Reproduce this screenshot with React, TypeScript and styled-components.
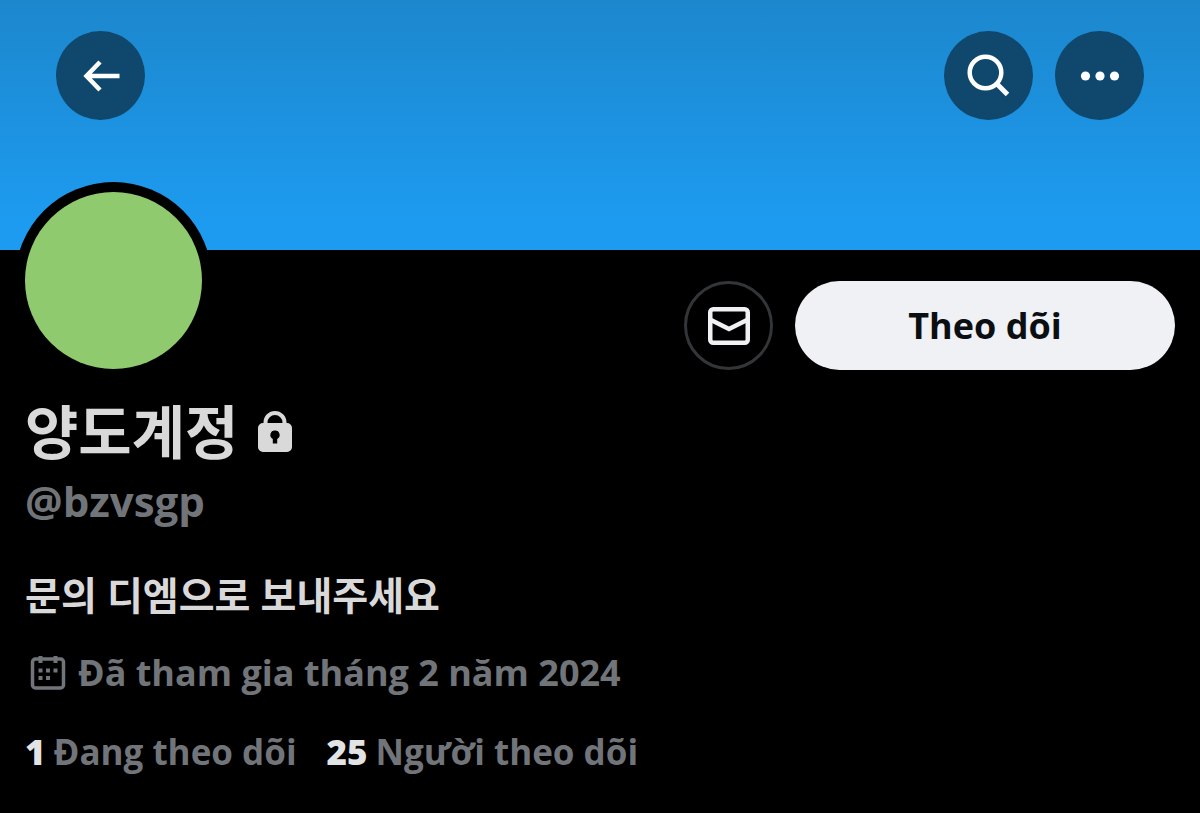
import React from "react";
import styled, { createGlobalStyle } from "styled-components";

const GlobalStyle = createGlobalStyle`
  *, *::before, *::after { box-sizing: border-box; }
  body {
    margin: 0;
    background: #000;
    color: #d9d9d9;
    font-family: "Open Sans", "Noto Sans CJK KR", sans-serif;
    font-weight: 700;
  }
  button { font: inherit; cursor: pointer; padding: 0; border: 0; }
`;

const Banner = styled.header`
  display: flex;
  justify-content: space-between;
  align-items: flex-start;
  height: 250px;
  padding: 31px 56px;
  background: linear-gradient(#1c87cd, #1d9bf0 90%);
`;

const ButtonGroup = styled.div`
  display: flex;
  gap: 22px;
`;

const Actions = styled(ButtonGroup)`
  margin-top: 31px;
`;

const RoundButton = styled.button<{ $outlined?: boolean }>`
  display: flex;
  align-items: center;
  justify-content: center;
  flex: none;
  width: 89px;
  height: 89px;
  border-radius: 50%;
  color: ${(p) => (p.$outlined ? "#eff1f3" : "#fff")};
  background: ${(p) => (p.$outlined ? "#000" : "#0f476d")};
  border: ${(p) => (p.$outlined ? "3px solid #333639" : "0")};
`;

const Profile = styled.main`
  padding: 0 25px 36px;
`;

const TopRow = styled.div`
  display: flex;
  justify-content: space-between;
  align-items: flex-start;
`;

const Avatar = styled.div`
  width: 177px;
  height: 177px;
  margin-top: -58px;
  border-radius: 50%;
  background: #8fca6e;
  box-shadow: 0 0 0 10px #000;
`;

const FollowButton = styled.button`
  width: 380px;
  height: 89px;
  border-radius: 45px;
  background: #eff1f4;
  color: #0c0f12;
  font-size: 36px;
`;

const NameRow = styled.div`
  display: flex;
  align-items: center;
  gap: 20px;
  margin-top: 26px;
`;

const Name = styled.h1`
  margin: 0;
  font-size: 58px;
  line-height: 72px;
`;

const Handle = styled.p`
  margin: 9px 0 0;
  font-size: 42px;
  line-height: 48px;
  color: #717579;
`;

const Bio = styled.p`
  margin: 46px 0 0;
  font-size: 39px;
  line-height: 48px;
`;

const Joined = styled.p`
  display: flex;
  align-items: center;
  gap: 12px;
  margin: 30px 0 0;
  padding-left: 5px;
  font-size: 36px;
  line-height: 48px;
  color: #717579;
`;

const Stats = styled.nav`
  display: flex;
  gap: 30px;
  margin-top: 31px;
`;

const Stat = styled.a`
  display: flex;
  gap: 8px;
  font-size: 35px;
  line-height: 48px;
  color: #717579;
  text-decoration: none;

  strong { color: #e2e3e4; font-weight: 800; }
`;

const BackIcon = () => (
  <svg width="40" height="34" viewBox="0 0 40 34" fill="none" stroke="currentColor" strokeWidth="4.500" aria-hidden="true">
    <path d="M38.500 17H5M19 3 5.500 17 19 31" />
  </svg>
);

const SearchIcon = () => (
  <svg width="44" height="44" viewBox="0 0 44 44" fill="none" stroke="currentColor" strokeWidth="4.500" aria-hidden="true">
    <circle cx="18.500" cy="18.500" r="15.800" />
    <path d="M29.500 29.500 40.500 40.500" strokeWidth="5" />
  </svg>
);

const MoreIcon = () => (
  <svg width="40" height="12" viewBox="0 0 40 12" fill="currentColor" aria-hidden="true">
    <circle cx="5.500" cy="6" r="4.600" />
    <circle cx="20" cy="6" r="4.600" />
    <circle cx="34.500" cy="6" r="4.600" />
  </svg>
);

const MailIcon = () => (
  <svg width="42" height="38" viewBox="0 0 42 38" fill="none" stroke="currentColor" strokeWidth="4.500" aria-hidden="true">
    <rect x="2.250" y="2.250" width="37.500" height="33.500" rx="3" />
    <path d="M3 13 21 22 39 13" />
  </svg>
);

const LockIcon = () => (
  <svg width="34" height="42" viewBox="0 0 34 42" aria-label="Tài khoản riêng tư" role="img">
    <path d="M7.500 15V11.500a9.500 9.500 0 0 1 19 0V15" fill="none" stroke="currentColor" strokeWidth="4" />
    <path
      fillRule="evenodd"
      fill="currentColor"
      d="M5 12h24a5 5 0 0 1 5 5v19a5 5 0 0 1-5 5H5a5 5 0 0 1-5-5V17a5 5 0 0 1 5-5ZM17 19.500a4.500 4.500 0 0 0-2.200 8.500V32.500h4.400V28A4.500 4.500 0 0 0 17 19.500Z"
    />
  </svg>
);

const CalendarIcon = () => (
  <svg width="36" height="36" viewBox="0 0 36 36" fill="none" stroke="currentColor" strokeWidth="3.500" aria-hidden="true">
    <rect x="2.500" y="4" width="31" height="29" rx="3" />
    <path d="M10.500 1v7M25.500 1v7" strokeWidth="4" />
    <path
      d="M8.500 13.500h4v4h-4zM16 13.500h4v4h-4zM23.500 13.500h4v4h-4zM8.500 21h4v4h-4zM16 21h4v4h-4z"
      fill="currentColor"
      stroke="none"
    />
  </svg>
);

export default function App() {
  return (
    <>
      <GlobalStyle />
      <Banner>
        <RoundButton aria-label="Quay lại">
          <BackIcon />
        </RoundButton>
        <ButtonGroup>
          <RoundButton aria-label="Tìm kiếm">
            <SearchIcon />
          </RoundButton>
          <RoundButton aria-label="Thêm">
            <MoreIcon />
          </RoundButton>
        </ButtonGroup>
      </Banner>
      <Profile>
        <TopRow>
          <Avatar />
          <Actions>
            <RoundButton $outlined aria-label="Nhắn tin">
              <MailIcon />
            </RoundButton>
            <FollowButton>Theo dõi</FollowButton>
          </Actions>
        </TopRow>
        <NameRow>
          <Name>양도계정</Name>
          <LockIcon />
        </NameRow>
        <Handle>@bzvsgp</Handle>
        <Bio>문의 디엠으로 보내주세요</Bio>
        <Joined>
          <CalendarIcon />
          Đã tham gia tháng 2 năm 2024
        </Joined>
        <Stats>
          <Stat href="#following">
            <strong>1</strong>
            <span>Đang theo dõi</span>
          </Stat>
          <Stat href="#followers">
            <strong>25</strong>
            <span>Người theo dõi</span>
          </Stat>
        </Stats>
      </Profile>
    </>
  );
}
